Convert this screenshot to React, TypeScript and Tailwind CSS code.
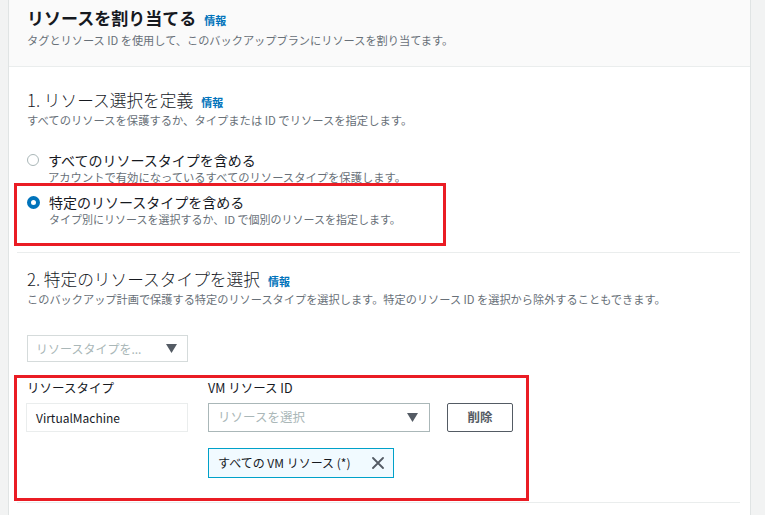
import React from "react";

function InfoLink() {
  return <span className="ml-[8px] text-[11px] font-bold text-[#0073bb]">情報</span>;
}

function Caret() {
  return (
    <svg width="11" height="9" viewBox="0 0 11 9" className="shrink-0">
      <polygon points="0,0 11,0 5.5,9" fill="#545b64" />
    </svg>
  );
}

function CloseIcon() {
  return (
    <svg width="12" height="12" viewBox="0 0 12 12" className="shrink-0">
      <path d="M1 1 L11 11 M11 1 L1 11" stroke="#545b64" strokeWidth="1.8" strokeLinecap="round" />
    </svg>
  );
}

function Radio({ checked }: { checked?: boolean }) {
  if (checked) {
    return (
      <span className="mt-[3px] h-[13px] w-[13px] shrink-0 rounded-full border-[4px] border-[#0073bb] bg-white" />
    );
  }
  return <span className="mt-[3px] h-[12px] w-[12px] shrink-0 rounded-full border border-[#aab7b8] bg-white" />;
}

export default function App() {
  return (
    <div className="flex h-[515px] w-[765px] overflow-hidden bg-[#f2f3f3] font-['Noto_Sans_CJK_JP',sans-serif] text-[#16191f]">
      <div className="relative ml-[8px] w-[743px] border-r border-l border-[#e0e4e4] bg-white">
        {/* header */}
        <div className="h-[67px] border-b border-[#eaeded] bg-[#fafafa] pl-[18px] pt-[7px]">
          <div className="flex h-[22px] items-baseline">
            <span className="text-[17px] font-bold leading-[22px]">リソースを割り当てる</span>
            <InfoLink />
          </div>
          <div className="mt-[3px] text-[11.2px] leading-[16px] text-[#687078]">
            タグとリソース ID を使用して、このバックアップブランにリソースを割り当てます。
          </div>
        </div>

        {/* section 1 */}
        <div className="pl-[18px] pt-[22px]">
          <div className="flex h-[22px] items-baseline">
            <span className="text-[16.7px] font-light leading-[22px]">1. リソース選択を定義</span>
            <InfoLink />
          </div>
          <div className="mt-[1px] text-[11.3px] leading-[16px] text-[#687078]">
            すべてのリソースを保護するか、タイプまたは ID でリソースを指定します。
          </div>

          <div className="mt-[23px] flex gap-[9px]">
            <Radio />
            <div>
              <div className="text-[14px] leading-[18px]">すべてのリソースタイプを含める</div>
              <div className="text-[11.3px] leading-[16px] text-[#687078]">
                アカウントで有効になっているすべてのリソースタイプを保護します。
              </div>
            </div>
          </div>
          <div className="mt-[8px] flex gap-[9px]">
            <Radio checked />
            <div>
              <div className="text-[14px] leading-[18px]">特定のリソースタイプを含める</div>
              <div className="text-[11px] leading-[16px] text-[#687078]">
                タイプ別にリソースを選択するか、ID で個別のリソースを指定します。
              </div>
            </div>
          </div>
        </div>

        <div className="mt-[25px] ml-[8px] mr-[10px] h-px bg-[#eaeded]" />

        {/* section 2 */}
        <div className="pl-[18px] pt-[15px]">
          <div className="flex h-[22px] items-baseline">
            <span className="text-[16.7px] font-light leading-[22px]">2. 特定のリソースタイプを選択</span>
            <InfoLink />
          </div>
          <div className="mt-[1px] text-[11.2px] leading-[16px] text-[#687078]">
            このバックアップ計画で保護する特定のリソースタイプを選択します。特定のリソース ID を選択から除外することもできます。
          </div>

          <div className="mt-[28px] flex h-[27px] w-[161px] items-center justify-between border border-[#d5dbdb] pl-[8px] pr-[10px]">
            <span className="text-[12px] text-[#aab7b8]">リソースタイプを...</span>
            <Caret />
          </div>

          <div className="mt-[17px] flex">
            <div className="w-[181px]">
              <div className="text-[12.5px] leading-[18px]">リソースタイプ</div>
              <div className="mt-[6px] flex h-[29px] w-[162px] -ml-px items-center border border-[#eaeded] pl-[9px] text-[12px]">
                VirtualMachine
              </div>
            </div>
            <div className="w-[239px]">
              <div className="text-[12.5px] leading-[18px]">VM リソース ID</div>
              <div className="mt-[6px] flex h-[29px] w-[222px] items-center justify-between border border-[#aab7b8] pl-[9px] pr-[11px]">
                <span className="text-[12.5px] text-[#aab7b8]">リソースを選択</span>
                <Caret />
              </div>
              <div className="mt-[16px] inline-flex h-[30px] w-[186px] items-center justify-between border border-[#00a1c9] bg-[#f1faff] pl-[9px] pr-[9px]">
                <span className="text-[12px]">すべての VM リソース (*)</span>
                <CloseIcon />
              </div>
            </div>
            <div className="pt-[24px]">
              <div className="flex h-[29px] w-[66px] items-center justify-center rounded-[2px] border border-[#545b64] text-[12.5px] font-bold text-[#545b64]">
                削除
              </div>
            </div>
          </div>
        </div>

        <div className="mt-[24px] ml-[8px] mr-[10px] h-px bg-[#eaeded]" />

        {/* annotation boxes */}
        <div className="absolute left-[5px] top-[183px] h-[63px] w-[432px] border-[3px] border-[#ea1c24]" />
        <div className="absolute left-[5px] top-[375px] h-[126px] w-[515px] border-[3px] border-[#ea1c24]" />
      </div>
    </div>
  );
}
